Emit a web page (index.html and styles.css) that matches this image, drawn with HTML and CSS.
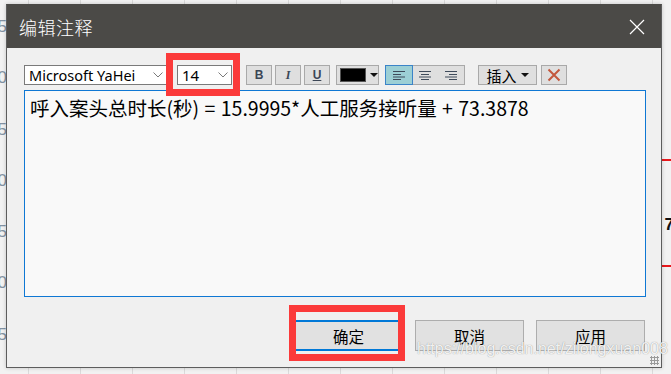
FILE: index.html
```html
<!DOCTYPE html>
<html lang="zh-CN">

<head>
    <meta charset="UTF-8">
    <meta name="viewport" content="width=device-width, initial-scale=1.0">
    <title>编辑注释</title>
    <link rel="stylesheet" href="styles.css">
</head>

<body>

    <div class="desk">
        <div class="axis">
            <span>5</span>
            <span>0</span>
            <span>5</span>
            <span>0</span>
            <span>5</span>
            <span>0</span>
            <span>5</span>
        </div>
        <div class="plot">
            <span class="mark mark-a"></span>
            <span class="mark-label">7</span>
            <span class="mark mark-b"></span>
        </div>

        <div class="dialog">
            <div class="titlebar">
                <span class="title">编辑注释</span>
                <button class="close" type="button">
                    <svg width="16" height="16" viewBox="0 0 16 16">
                        <path d="M1 1 L15 15 M15 1 L1 15" stroke="#fff" stroke-width="1.2" fill="none" />
                    </svg>
                </button>
            </div>

            <div class="dialog-body">
                <div class="toolbar">
                    <div class="select font-select">
                        <span>Microsoft YaHei</span>
                        <svg class="chev" width="10" height="6" viewBox="0 0 10 6">
                            <path d="M0.5 0.5 L5 5 L9.5 0.5" stroke="#7a7a7a" fill="none" />
                        </svg>
                    </div>
                    <div class="select size-select highlight">
                        <span>14</span>
                        <svg class="chev" width="10" height="6" viewBox="0 0 10 6">
                            <path d="M0.5 0.5 L5 5 L9.5 0.5" stroke="#7a7a7a" fill="none" />
                        </svg>
                    </div>
                    <button class="tool bold" type="button">B</button>
                    <button class="tool italic" type="button">I</button>
                    <button class="tool under" type="button">U</button>
                    <button class="tool color" type="button">
                        <span class="swatch"></span>
                        <span class="arrow"></span>
                    </button>
                    <div class="align-group">
                        <button class="align active" type="button">
                            <svg width="12" height="9" viewBox="0 0 12 9">
                                <path d="M0 0.5 H12 M0 3.5 H8 M0 6 H12 M0 8.5 H8" stroke="#3f4b5b" />
                            </svg>
                        </button>
                        <button class="align" type="button">
                            <svg width="12" height="9" viewBox="0 0 12 9">
                                <path d="M0 0.5 H12 M2 3.5 H10 M0 6 H12 M2 8.5 H10" stroke="#3f4b5b" />
                            </svg>
                        </button>
                        <button class="align" type="button">
                            <svg width="12" height="9" viewBox="0 0 12 9">
                                <path d="M0 0.5 H12 M4 3.5 H12 M0 6 H12 M4 8.5 H12" stroke="#3f4b5b" />
                            </svg>
                        </button>
                    </div>
                    <button class="tool insert" type="button">插入<span class="arrow"></span></button>
                    <button class="tool remove" type="button">
                        <svg width="14" height="14" viewBox="0 0 14 14">
                            <path d="M1.5 1.5 L12.5 12.5 M12.5 1.5 L1.5 12.5" stroke="#c4573c" stroke-width="2" fill="none" />
                        </svg>
                    </button>
                </div>

                <div class="editor">呼入案头总时长(秒) = 15.9995*人工服务接听量 + 73.3878</div>

                <div class="actions">
                    <button class="btn primary highlight" type="button">确定</button>
                    <button class="btn" type="button">取消</button>
                    <button class="btn" type="button">应用</button>
                </div>
            </div>

            <span class="watermark">https://blog.csdn.net/zilongxuan008</span>
            <span class="grip"></span>
        </div>
    </div>

</body>

</html>
```

FILE: styles.css
```css
* {
    box-sizing: border-box;
}

body {
    margin: 0;
    font-family: "Noto Sans CJK SC", "Noto Sans", sans-serif;
    background: #f0f0f0;
    overflow: hidden;
}

.desk {
    position: relative;
    width: 671px;
    height: 374px;
    display: flex;
    background-color: #f2f2f2;
    background-image: linear-gradient(90deg, #dadada 1px, transparent 1px);
    background-size: 52px 100%;
    background-position: 28px 0;
}

.axis {
    width: 6px;
    display: flex;
    flex-direction: column;
    align-items: flex-end;
    padding-top: 15px;
    font-family: "Liberation Sans", sans-serif;
    font-size: 17px;
    color: #8392a3;
    line-height: 52.5px;
    overflow: visible;
    white-space: nowrap;
}

.axis span {
    height: 52.5px;
    line-height: 24px;
    margin-right: -1px;
}

.plot {
    flex: 1;
    position: relative;
}

.mark {
    position: absolute;
    right: 0;
    width: 9px;
    height: 2px;
    background: #e8181c;
}

.mark-a {
    top: 159px;
}

.mark-b {
    top: 265px;
}

.mark-label {
    position: absolute;
    right: -3px;
    top: 215px;
    font-family: "Liberation Sans", sans-serif;
    font-weight: bold;
    font-size: 17px;
    color: #111;
}

/* dialog window */
.dialog {
    position: absolute;
    left: 6px;
    top: 4px;
    width: 656px;
    height: 364px;
    border: 1px solid #5d5d5d;
    border-top-color: #4b4a47;
    background: #f0f0f0;
    box-shadow: 0 0 4px rgba(0, 0, 0, 0.2);
}

.titlebar {
    height: 43px;
    background: #4b4a47;
    display: flex;
    align-items: center;
    justify-content: space-between;
    padding: 0 16px 0 12px;
}

.title {
    color: #fff;
    font-size: 18px;
    font-weight: 300;
    letter-spacing: 0.5px;
}

.close {
    background: none;
    border: none;
    padding: 0;
    display: flex;
}

.dialog-body {
    padding: 17px 15px 0 17px;
}

.toolbar {
    display: flex;
    align-items: center;
    height: 20px;
}

.select {
    height: 20px;
    background: #fff;
    border: 1px solid #7a7a7a;
    display: flex;
    align-items: center;
    justify-content: space-between;
    padding: 0 3px 0 4px;
    font-size: 15px;
    color: #000;
}

.font-select {
    width: 143px;
}

.font-select span {
    font-family: "Noto Sans", sans-serif;
    font-size: 14.5px;
}

.size-select {
    width: 55px;
    margin-left: 10px;
}

.size-select span {
    font-family: "Noto Sans", sans-serif;
    font-size: 15px;
}

.highlight {
    position: relative;
}

.highlight::after {
    content: "";
    position: absolute;
    border: 7px solid #fb3a3a;
}

.size-select::after {
    left: -12px;
    right: -9px;
    top: -13px;
    bottom: -12px;
}

.tool {
    height: 20px;
    width: 26px;
    margin-left: 3px;
    padding: 0;
    background: #dfdfdf;
    border: 1px solid #a9a9a9;
    color: #3b4656;
    font-family: "Liberation Serif", serif;
    font-size: 12px;
    display: flex;
    align-items: center;
    justify-content: center;
}

.bold {
    margin-left: 14px;
    font-family: "Liberation Sans", sans-serif;
    font-weight: bold;
}

.italic {
    font-style: italic;
    font-weight: bold;
}

.under {
    font-family: "Liberation Sans", sans-serif;
    font-weight: bold;
    text-decoration: underline;
}

.color {
    width: 43px;
    margin-left: 6px;
    justify-content: flex-start;
    padding-left: 3px;
}

.swatch {
    width: 26px;
    height: 14px;
    background: #000;
    border: 1px solid #555;
}

.arrow {
    width: 0;
    height: 0;
    border-left: 4px solid transparent;
    border-right: 4px solid transparent;
    border-top: 4px solid #111;
    margin-left: 4px;
}

.align-group {
    margin-left: 6px;
    display: flex;
    height: 20px;
    width: 80px;
    border: 1px solid #a9a9a9;
    background: #dfdfdf;
}

.align {
    flex: 1;
    padding: 0;
    border: none;
    background: none;
    display: flex;
    align-items: center;
    justify-content: center;
}

.align.active {
    background: #9ccfd5;
    outline: 1px solid #3b84c8;
}

.insert {
    width: 59px;
    margin-left: 13px;
    font-family: "Noto Sans CJK SC", sans-serif;
    font-size: 15px;
    color: #000;
    line-height: 1;
}

.remove {
    margin-left: 4px;
}

.editor {
    margin-top: 5px;
    width: 622px;
    height: 207px;
    background: #f9f9f9;
    border: 1px solid #0f78d4;
    padding: 4px 5px;
    font-size: 19.5px;
    line-height: 25px;
    word-spacing: 1px;
    color: #000;
}

.actions {
    margin-top: 23px;
    display: flex;
    justify-content: flex-end;
    gap: 12px;
    padding-right: 1px;
}

.btn {
    width: 109px;
    height: 31px;
    background: #e1e1e1;
    border: 1px solid #adadad;
    font-family: "Noto Sans CJK SC", sans-serif;
    font-size: 15.5px;
    color: #000;
    padding: 0;
}

.btn.primary {
    border: 2px solid #0078d7;
}

.btn.primary::after {
    left: -7px;
    right: -4px;
    top: -17px;
    bottom: -12px;
}

.watermark {
    position: absolute;
    left: 410px;
    top: 335px;
    font-family: "Liberation Sans", sans-serif;
    font-size: 16px;
    color: rgba(255, 255, 255, 0.9);
    text-shadow: 0 0 1px rgba(90, 90, 90, 0.7);
    white-space: nowrap;
}

.grip {
    position: absolute;
    right: 2px;
    bottom: 2px;
    width: 9px;
    height: 9px;
    background-image: radial-gradient(#9a9a9a 1px, transparent 1.3px);
    background-size: 3px 3px;
}
```
